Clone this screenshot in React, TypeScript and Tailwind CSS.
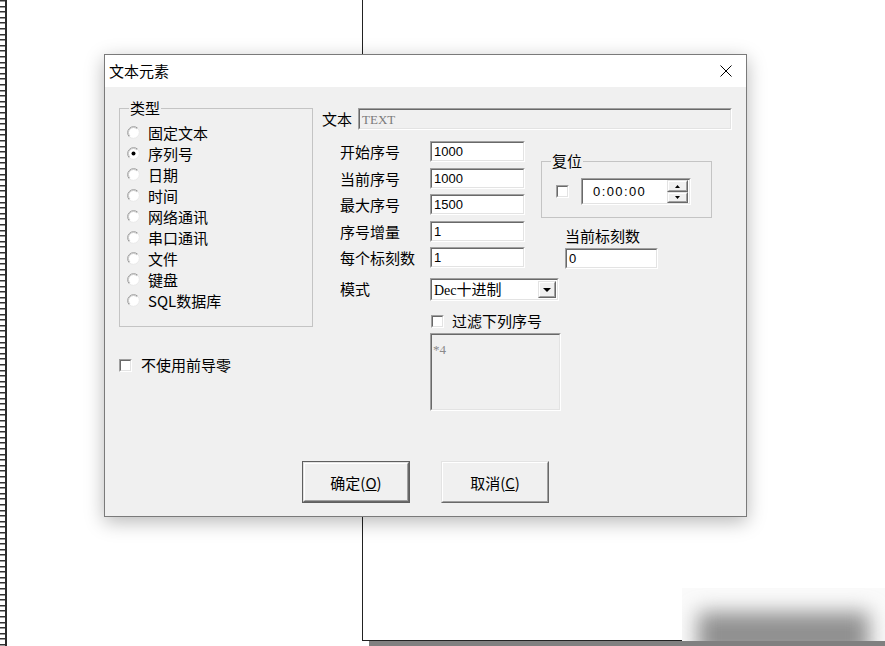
import type { ReactNode } from 'react';

const CJK = "font-['Noto_Sans_CJK_SC',sans-serif]";

function Sunken({
  className,
  inner,
  children,
}: {
  className: string;
  inner: string;
  children?: ReactNode;
}) {
  return (
    <div className={`border border-t-[#a0a0a0] border-l-[#a0a0a0] border-b-white border-r-white ${className}`}>
      <div className={`h-full w-full border border-t-[#696969] border-l-[#696969] border-b-[#e3e3e3] border-r-[#e3e3e3] ${inner}`}>
        {children}
      </div>
    </div>
  );
}

function Raised({ className, children }: { className: string; children?: ReactNode }) {
  return (
    <div className={`border border-t-[#e3e3e3] border-l-[#e3e3e3] border-b-[#696969] border-r-[#696969] ${className}`}>
      <div className="flex h-full w-full items-center justify-center border border-t-white border-l-white border-b-[#a0a0a0] border-r-[#a0a0a0] bg-[#f0f0f0]">
        {children}
      </div>
    </div>
  );
}

function CheckBox() {
  return <Sunken className="h-[13px] w-[13px] shrink-0" inner="bg-white" />;
}

function Radio({ checked }: { checked?: boolean }) {
  return (
    <svg width="13" height="13" viewBox="0 0 13 13" className="shrink-0">
      <circle cx="6.5" cy="6.5" r="6" fill="#fff" />
      <path d="M2.26 10.74 A6 6 0 0 1 10.74 2.26" stroke="#9a9a9a" fill="none" />
      <path d="M2.96 10.04 A5 5 0 0 1 10.04 2.96" stroke="#c4c4c4" fill="none" />
      <path d="M10.74 2.26 A6 6 0 0 1 2.26 10.74" stroke="#e8e8e8" fill="none" />
      {checked && <circle cx="6.5" cy="6.5" r="2" fill="#000" />}
    </svg>
  );
}

const TYPES = ['固定文本', '序列号', '日期', '时间', '网络通讯', '串口通讯', '文件', '键盘', 'SQL数据库'];

const FIELDS = [
  { label: '开始序号', value: '1000', mt: 'mt-0' },
  { label: '当前序号', value: '1000', mt: 'mt-[6px]' },
  { label: '最大序号', value: '1500', mt: 'mt-[5px]' },
  { label: '序号增量', value: '1', mt: 'mt-[6px]' },
  { label: '每个标刻数', value: '1', mt: 'mt-[5px]' },
];

function Field({ value, className }: { value: string; className: string }) {
  return (
    <Sunken className={className} inner="bg-white flex items-center pl-[2px]">
      <span className="font-['Liberation_Sans',sans-serif] text-[13px] leading-none text-black">{value}</span>
    </Sunken>
  );
}

export default function App() {
  return (
    <div className={`relative h-[646px] w-[885px] overflow-hidden bg-white ${CJK}`}>
      {/* 标尺 */}
      <div className="absolute left-0 top-0 h-full w-[7px] border-r-2 border-[#2a2a2a] bg-[repeating-linear-gradient(to_bottom,#333_0px,#333_1px,#999_1px,#999_2px,#fff_2px,#fff_5.6px)]" />

      {/* 页面边框 */}
      <div className="absolute left-[362px] top-[-20px] h-[661px] w-[600px] border-b border-l border-[#222] shadow-[7px_5px_0_#808080]" />

      {/* 水印 */}
      <div className="absolute left-[682px] top-[588px] h-[53px] w-[203px] overflow-hidden bg-[#fafafa]">
        <div className="mx-[16px] mt-[24px] h-[46px] bg-[#909090] blur-[10px]" />
      </div>

      {/* 对话框 */}
      <div className="absolute left-[104px] top-[54px] flex h-[463px] w-[643px] flex-col border border-[#7a7a7a] bg-[#f0f0f0] shadow-[0_5px_18px_rgba(0,0,0,0.28)]">
        <div className="flex h-[32px] shrink-0 items-center justify-between bg-white pl-[4px] pr-[14px]">
          <span className="text-[15px] leading-[20px] text-black">文本元素</span>
          <svg width="12" height="12" viewBox="0 0 12 12">
            <path d="M0.5 0.5 L11.5 11.5 M11.5 0.5 L0.5 11.5" stroke="#000" strokeWidth="1" />
          </svg>
        </div>

        <div className="flex flex-1 flex-col pl-[14px] pt-[11px] text-[15px] text-black">
          <div className="flex">
            {/* 左列 */}
            <div className="flex w-[194px] flex-col">
              <fieldset className="border border-[#c4c4c4] pb-[15px] pl-[9px]">
                <legend className="px-[1px] text-[15px] leading-[20px]">类型</legend>
                <div className="-ml-[2px] flex flex-col pt-[4px]">
                  {TYPES.map((t, i) => (
                    <div key={t} className="flex h-[21px] items-center">
                      <Radio checked={i === 1} />
                      <span className="ml-[8px] leading-[20px]">{t}</span>
                    </div>
                  ))}
                </div>
              </fieldset>
              <div className="mt-[28px] flex h-[20px] items-center">
                <CheckBox />
                <span className="ml-[9px] leading-[20px]">不使用前导零</span>
              </div>
            </div>

            {/* 右列 */}
            <div className="ml-[9px] flex w-[410px] flex-col pt-[10px]">
              <div className="flex h-[22px] items-center">
                <span className="leading-[20px]">文本</span>
                <Sunken className="ml-[6px] h-[22px] w-[374px]" inner="bg-[#f0f0f0] flex items-center pl-[2px]">
                  <span className="font-['Liberation_Serif',serif] text-[13px] leading-none text-[#7a7a7a]">TEXT</span>
                </Sunken>
              </div>

              <div className="mt-[11px] flex">
                <div className="ml-[18px] flex flex-col">
                  {FIELDS.map((f) => (
                    <div key={f.label} className={`flex items-center ${f.mt}`}>
                      <span className="w-[90px] leading-[20px]">{f.label}</span>
                      <Field value={f.value} className="h-[21px] w-[95px]" />
                    </div>
                  ))}
                </div>

                <div className="ml-[16px] flex flex-col">
                  <fieldset className="mt-[10px] w-[171px] border border-[#c4c4c4] pb-[12px] pl-[9px]">
                    <legend className="px-[1px] text-[15px] leading-[20px]">复位</legend>
                    <div className="mt-[7px] flex items-center">
                      <div className="ml-[5px]">
                        <CheckBox />
                      </div>
                      <Sunken className="ml-[12px] h-[27px] w-[110px]" inner="bg-white flex items-center">
                        <span className="ml-[10px] flex-1 font-['Liberation_Sans',sans-serif] text-[13px] leading-none tracking-[1.4px]">
                          0:00:00
                        </span>
                        <div className="mr-[1px] flex h-[23px] w-[21px] flex-col">
                          <Raised className="h-[12px] w-full">
                            <svg width="5" height="3" viewBox="0 0 5 3">
                              <path d="M2.5 0 L5 3 L0 3 Z" fill="#000" />
                            </svg>
                          </Raised>
                          <Raised className="h-[11px] w-full">
                            <svg width="5" height="3" viewBox="0 0 5 3">
                              <path d="M0 0 L5 0 L2.5 3 Z" fill="#000" />
                            </svg>
                          </Raised>
                        </div>
                      </Sunken>
                    </div>
                  </fieldset>
                  <div className="ml-[24px] mt-[8px] flex flex-col">
                    <span className="leading-[20px]">当前标刻数</span>
                    <Field value="0" className="mt-[2px] h-[21px] w-[93px]" />
                  </div>
                </div>
              </div>

              <div className="ml-[18px] mt-[9px] flex items-center">
                <span className="-mt-[2px] w-[90px] leading-[20px]">模式</span>
                <Sunken className="h-[23px] w-[129px]" inner="bg-white flex items-center">
                  <span className="ml-[2px] flex-1 leading-none">
                    <span className="font-['Liberation_Serif',serif] text-[14px]">Dec</span>
                    <span className="text-[15px]">十进制</span>
                  </span>
                  <Raised className="mr-[1px] h-[17px] w-[18px]">
                    <svg width="8" height="4" viewBox="0 0 8 4">
                      <path d="M0 0 L8 0 L4 4 Z" fill="#000" />
                    </svg>
                  </Raised>
                </Sunken>
              </div>

              <div className="ml-[109px] mt-[10px] flex h-[20px] items-center">
                <CheckBox />
                <span className="ml-[8px] leading-[20px]">过滤下列序号</span>
              </div>

              <Sunken className="ml-[108px] mt-[2px] h-[78px] w-[131px]" inner="bg-[#f0f0f0] pl-[1px] pt-[2px]">
                <span className="font-['Liberation_Serif',serif] text-[13px] leading-none text-[#8a8a8a]">*4</span>
              </Sunken>
            </div>
          </div>

          {/* 按钮 */}
          <div className="mt-auto flex pb-[13px] pl-[183px]">
            <div className="h-[42px] w-[108px] border border-[#5f5f5f]">
              <Raised className="h-full w-full">
                <span className="text-[15px] leading-none">
                  确定(<span className="underline">O</span>)
                </span>
              </Raised>
            </div>
            <Raised className="ml-[31px] h-[42px] w-[108px]">
              <span className="text-[15px] leading-none">
                取消(<span className="underline">C</span>)
              </span>
            </Raised>
          </div>
        </div>
      </div>
    </div>
  );
}
